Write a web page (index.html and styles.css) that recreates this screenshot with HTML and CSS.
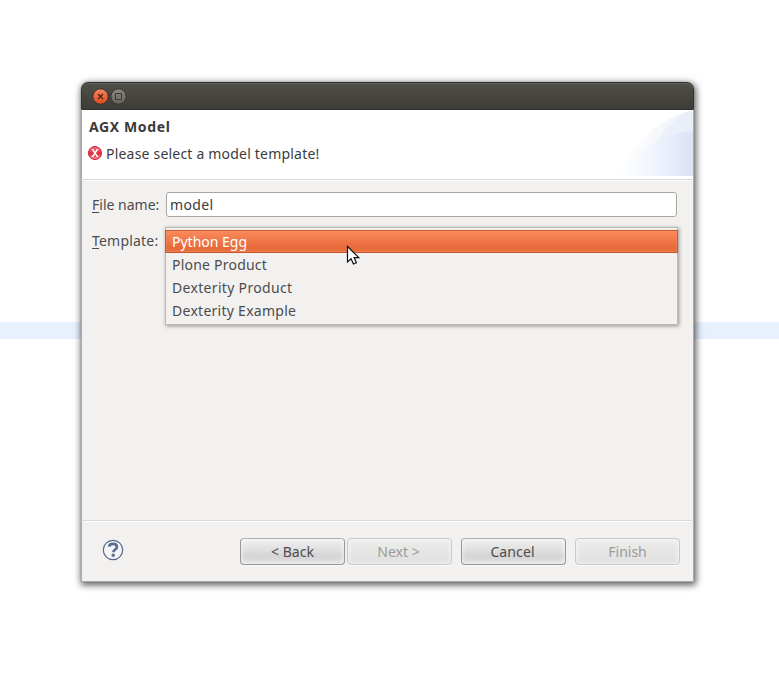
FILE: index.html
```html
<!DOCTYPE html>
<html lang="en">
<head>
<meta charset="utf-8">
<title>AGX Model</title>
<link rel="stylesheet" href="styles.css">
</head>
<body>
<main class="window">
  <div class="titlebar">
    <svg class="controls" width="36" height="18" viewBox="0 0 36 18">
      <defs>
        <linearGradient id="close" x2="0" y2="1"><stop stop-color="#f68463"/><stop offset="1" stop-color="#dd4b1f"/></linearGradient>
        <linearGradient id="max" x2="0" y2="1"><stop stop-color="#8b8981"/><stop offset="1" stop-color="#62615a"/></linearGradient>
      </defs>
      <circle cx="9.500" cy="9.500" r="7.700" fill="url(#close)" stroke="#33322e"/>
      <path d="M7 7l5 5M12 7l-5 5" stroke="#4b2116" stroke-width="1.300"/>
      <circle cx="27.500" cy="9.500" r="7.700" fill="url(#max)" stroke="#33322e"/>
      <rect x="24.500" y="6.500" width="6" height="6" fill="none" stroke="#3c3b37"/>
    </svg>
  </div>
  <header class="header">
    <div class="heading">
      <h1><span class="t-title">AGX Model</span></h1>
      <p class="message">
        <svg width="16" height="16" viewBox="0 0 16 16">
          <defs><linearGradient id="err" x2="0" y2="1"><stop stop-color="#f0717a"/><stop offset=".55" stop-color="#dd2e3f"/><stop offset="1" stop-color="#f58a8d"/></linearGradient></defs>
          <circle cx="8" cy="8" r="6.600" fill="url(#err)" stroke="#cf3345"/>
          <path d="M5.600 4.500l4.800 7M10.400 4.500l-4.800 7" stroke="#fff" stroke-width="1.400"/>
          <path d="M4.500 4.500h2M9.500 4.500h2M4.500 11.500h2M9.500 11.500h2" stroke="#fff" stroke-width=".8"/>
        </svg>
        <span class="t-message">Please select a model template!</span>
      </p>
    </div>
    <svg class="banner" width="75" height="66" viewBox="0 0 75 66">
      <defs>
        <linearGradient id="arc1"><stop stop-color="#fff"/><stop offset="1" stop-color="#edf1fa"/></linearGradient>
        <linearGradient id="arc2"><stop stop-color="#fff"/><stop offset=".45" stop-color="#f1f5fd"/><stop offset="1" stop-color="#dae2f6"/></linearGradient>
      </defs>
      <path d="M0 66C17 31 42 8 75 0V66z" fill="url(#arc1)"/>
      <path d="M30 45C41 23 57 7 75 0V66H30z" fill="#e3eaf8" opacity=".5"/>
      <path d="M0 66C20 41 44 24 75 21V66z" fill="url(#arc2)"/>
    </svg>
  </header>
  <section class="form">
    <div class="row">
      <label><span class="t-file"><u>F</u>ile name:</span></label>
      <div class="field"><span class="t-model">model</span></div>
    </div>
    <div class="row template">
      <label><span class="t-template"><u>T</u>emplate:</span></label>
      <ul class="menu">
        <li class="selected"><span class="t-egg">Python Egg</span></li>
        <li><span class="t-plone">Plone Product</span></li>
        <li><span class="t-dext">Dexterity Product</span></li>
        <li><span class="t-example">Dexterity Example</span></li>
      </ul>
    </div>
  </section>
  <footer class="footer">
    <svg class="help" width="22" height="22" viewBox="0 0 22 22">
      <circle cx="11" cy="11" r="9.700" fill="#f4f4f4" stroke="#56698d" stroke-width="1.200"/>
      <path d="M7.200 7.700C7.300 5.700 9 4.900 11 4.900c2.300 0 3.900 1.200 3.900 3 0 2.600-3.500 2.700-3.500 5.300" fill="none" stroke="#5a6d93" stroke-width="2.700"/>
      <circle cx="11.200" cy="16.300" r="1.700" fill="#5a6d93"/>
    </svg>
    <div class="buttons">
      <button><span class="t-back">&lt; Back</span></button>
      <button disabled><span class="t-next">Next &gt;</span></button>
      <button class="apart"><span class="t-cancel">Cancel</span></button>
      <button class="apart" disabled><span class="t-finish">Finish</span></button>
    </div>
  </footer>
</main>
<svg class="pointer" width="14" height="22" viewBox="0 0 14 22">
  <path d="M1.500 1.500v15.500l3.600-3.300 2.300 5.300 3-1.300-2.300-5.100h4.700z" fill="#fff" stroke="#111" stroke-width="1.200"/>
</svg>
</body>
</html>
```
FILE: styles.css
```css
* { box-sizing: border-box; }
body {
  margin: 0;
  height: 681px;
  padding: 82px 0 0 81px;
  overflow: hidden;
  background: linear-gradient(#e6f1fd, #e6f1fd) 0 322px / 100% 17px no-repeat #fff;
  color: #4c4c4c;
  font: 14px/20px "Noto Sans", sans-serif;
}
.window {
  width: 613px;
  height: 500px;
  display: flex;
  flex-direction: column;
  border-radius: 7px 7px 0 0;
  background: #f2f1f0;
  box-shadow: 0 0 1px #777, 1px 2px 7px 1px rgba(0, 0, 0, .65);
}
.titlebar {
  height: 28px;
  padding: 4px 0 0 9px;
  border: 1px solid #34332f;
  border-radius: 7px 7px 0 0;
  background: linear-gradient(#504f48, #3d3c37);
  box-shadow: inset 0 1px #615f56;
}
.controls { display: block; }
.header {
  height: 70px;
  display: flex;
  justify-content: space-between;
  background: #fff;
  border: solid #aaa9a5;
  border-width: 0 1px 1px;
  border-bottom-color: #d9d8d6;
}
.heading { padding: 7px 0 0 7px; }
h1 { margin: 0; font-size: 14px; line-height: 20px; color: #3a3a3a; }
.message { margin: 6px 0 0 -2px; display: flex; align-items: center; gap: 3px; color: #3c3c3c; }
.message svg { flex: none; }
.banner { display: block; }
.form {
  flex: 1;
  padding: 12px 15px 0 10px;
  border: solid #aaa9a5;
  border-width: 0 1px;
  box-shadow: inset 0 1px #fafafa;
}
.row { display: grid; grid-template-columns: 74px 1fr; align-items: start; }
.row label { padding-top: 3px; }
.row u { text-decoration: underline; text-underline-offset: 2px; text-decoration-thickness: 1px; text-decoration-skip-ink: none; }
.field {
  height: 25px;
  margin-right: 1px;
  padding: 2px 3px;
  border: 1px solid #a9a6a1;
  border-radius: 3px;
  background: #fff;
  color: #3c3c3c;
}
.template { margin-top: 10px; }
.template label { padding-top: 4px; }
.menu {
  width: 513px;
  height: 98px;
  margin: 0 0 0 -1px;
  padding: 2px 0 0;
  list-style: none;
  border: 1px solid #bbb9b6;
  background: #f2f1f0;
  box-shadow: 1px 1px 4px rgba(0, 0, 0, .4);
}
.menu li { height: 23px; padding: 2px 6px; }
.menu .selected {
  margin: 0 -1px;
  padding: 1px 6px;
  color: #fff;
  border: 1px solid #c7572f;
  background: linear-gradient(#fb8a5c, #e76a3b 80%, #e9713f);
  box-shadow: inset 0 0 0 1px rgba(255, 150, 100, .35);
}
.footer {
  height: 62px;
  padding: 17px 13px 0 20px;
  display: flex;
  justify-content: space-between;
  border: 1px solid #aaa9a5;
  border-top-color: #d9d8d6;
  box-shadow: inset 0 1px #fafafa;
}
.help { margin-top: 1px; }
.buttons { display: flex; }
button {
  width: 105px;
  height: 27px;
  padding: 1px 0 0;
  margin-left: 2px;
  border: 1px solid #999896;
  border-top-color: #b2b1ae;
  border-radius: 4px;
  color: #4c4c4c;
  font: inherit;
  background: linear-gradient(#f0f0f0, #d5d5d5 70%, #e0e0e0);
  box-shadow: inset 0 0 4px 1px rgba(255, 255, 255, .6), 0 1px #fafafa;
}
button.apart { margin-left: 9px; }
button:disabled { color: #9b9b9b; border-color: #c9c8c6; background: linear-gradient(#ececeb, #e0e0e0); }
.t-title { letter-spacing: .62px; }
.t-message { letter-spacing: .2px; position: relative; top: 1px; }
.t-template { letter-spacing: .2px; }
.t-model { letter-spacing: .35px; }
.t-plone { letter-spacing: .22px; }
.t-dext { letter-spacing: .32px; }
.t-example { letter-spacing: .27px; }
.t-next, .t-cancel { position: relative; left: -1px; }
.t-cancel { letter-spacing: .1px; }
.pointer { position: absolute; left: 346px; top: 245px; }
```
